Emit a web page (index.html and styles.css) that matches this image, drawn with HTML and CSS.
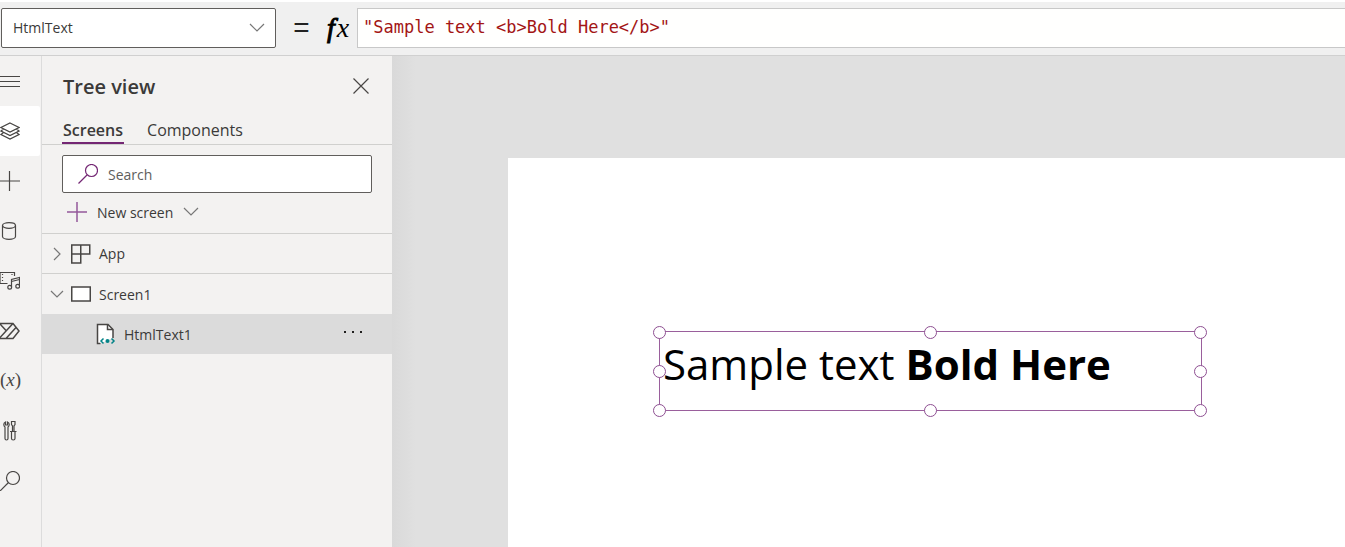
FILE: index.html
```html
<!DOCTYPE html>
<html lang="en">
<head>
    <meta charset="UTF-8">
    <meta name="viewport" content="width=device-width, initial-scale=1.0">
    <title>App Studio</title>
    <link rel="stylesheet" href="styles.css">
</head>
<body>
    <header class="formula-bar">
        <div class="property">
            <select class="property-select" aria-label="Property">
                <option>HtmlText</option>
            </select>
            <svg class="property-arrow" width="16" height="10" viewBox="0 0 16 10"><path d="M1 1l7 7 7-7"/></svg>
        </div>
        <span class="equals">=</span>
        <label class="fx" for="formula"><span class="fx-f">f</span>x</label>
        <input class="formula" id="formula" type="text" spellcheck="false" value="&quot;Sample text &lt;b&gt;Bold Here&lt;/b&gt;&quot;">
    </header>

    <div class="workspace">
        <nav class="rail">
            <button class="rail-item" aria-label="Menu">
                <svg width="20" height="20" viewBox="0 0 20 20"><path d="M0 5.5h20M0 10.5h20M0 15.5h20"/></svg>
            </button>
            <button class="rail-item active" aria-label="Tree view">
                <svg width="20" height="20" viewBox="0 0 20 20"><path d="M10 2L19 6.500 10 11 1 6.500zM3.500 8L1 10l9 4.500 9-4.500-2.500-2M3.500 11.500L1 13.500l9 4.500 9-4.500-2.500-2"/></svg>
            </button>
            <button class="rail-item" aria-label="Insert">
                <svg width="20" height="20" viewBox="0 0 20 20"><path d="M0 10h20M9.500 0v20"/></svg>
            </button>
            <button class="rail-item" aria-label="Data">
                <svg width="20" height="20" viewBox="0 0 20 20"><ellipse cx="9" cy="4.500" rx="6.500" ry="2.800"/><path d="M2.500 4.500v11c0 1.500 2.900 2.800 6.500 2.800s6.500-1.300 6.500-2.800v-11"/></svg>
            </button>
            <button class="rail-item" aria-label="Media">
                <svg width="20" height="20" viewBox="0 0 20 20"><path d="M14.500 5V1.500H0v11h7.500"/><path d="M2.500 3v9M12 3v3" stroke-dasharray="1 2"/><path d="M11.500 16V8.500l8-2V15M11.500 10.500l8-2"/><circle cx="9.700" cy="16.300" r="1.900"/><circle cx="17.700" cy="15.300" r="1.900"/></svg>
            </button>
            <button class="rail-item" aria-label="Power Automate">
                <svg class="bold-icon" width="20" height="20" viewBox="0 0 20 20"><path d="M0 2.500h13l6 7.500-6 7.500H0M0 3l6 6.500M12.500 3L0 16.500M16 6.500L6 17.500M0 9.500"/></svg>
            </button>
            <button class="rail-item variables" aria-label="Variables">(<i>x</i>)</button>
            <button class="rail-item" aria-label="Advanced tools">
                <svg width="20" height="20" viewBox="0 0 20 20"><path d="M5.500 1v3h2V1c1.200.5 1.700 1.500 1.700 2.500S8.700 5.500 8 6v11.500c0 2-3 2-3 0V6c-.7-.5-1.200-1.500-1.200-2.500S4.300 1.500 5.500 1zM11.500.5h3.500v3l-1 1.500v5.500h-1.500V5l-1-1.500zM10 10.500h6.500M11.500 10.500H15v7c0 2-3.500 2-3.500 0z"/></svg>
            </button>
            <button class="rail-item" aria-label="Search">
                <svg width="20" height="20" viewBox="0 0 20 20"><circle cx="13" cy="7" r="6.500"/><path d="M8.500 11.500L0 20"/></svg>
            </button>
        </nav>

        <aside class="tree-view">
            <div class="tree-header">
                <h2 class="tree-title">Tree view</h2>
                <button class="close" aria-label="Close">
                    <svg width="16" height="16" viewBox="0 0 16 16"><path d="M.5.5l15 15M15.500.5l-15 15"/></svg>
                </button>
            </div>
            <div class="tabs" role="tablist">
                <button class="tab selected" role="tab" aria-selected="true">Screens</button>
                <button class="tab" role="tab" aria-selected="false">Components</button>
            </div>
            <label class="search">
                <svg width="20" height="20" viewBox="0 0 20 20"><circle cx="13.500" cy="6.500" r="6"/><path d="M9 11L.5 19.500"/></svg>
                <input class="search-input" type="text" placeholder="Search" aria-label="Search">
            </label>
            <button class="new-screen">
                <svg class="purple" width="20" height="20" viewBox="0 0 20 20"><path d="M0 10h20M10 0v20"/></svg>
                <span>New screen</span>
                <svg class="chevron" width="16" height="10" viewBox="0 0 16 10"><path d="M1 1l7 7 7-7"/></svg>
            </button>
            <ul class="tree">
                <li class="row ruled">
                    <svg class="chevron arrow" width="14" height="14" viewBox="0 0 14 14"><path d="M4 1l6 6-6 6"/></svg>
                    <svg class="type-icon" width="20" height="20" viewBox="0 0 20 20"><path d="M.75 1h18v9H.75zM.75 1h9v18h-9z"/></svg>
                    <span>App</span>
                </li>
                <li class="row ruled screen-row">
                    <svg class="chevron arrow" width="14" height="14" viewBox="0 0 14 14"><path d="M1 4l6 6 6-6"/></svg>
                    <svg class="type-icon" width="20" height="20" viewBox="0 0 20 20"><rect class="paper" x=".75" y="3" width="18.500" height="14"/></svg>
                    <span>Screen1</span>
                </li>
                <li class="row child">
                    <svg class="type-icon" width="20" height="22" viewBox="0 0 20 22"><path class="paper" d="M4.500 20.500H1.500v-19H12l5 5V15"/><path d="M11.500 1.500v5H17"/><path class="teal" d="M7.500 15.500L5 18l2.500 2.500M15.500 15.500L18 18l-2.500 2.500"/><circle class="teal-dot" cx="11.500" cy="18" r="2"/></svg>
                    <span>HtmlText1</span>
                    <button class="more" aria-label="More actions">
                        <svg width="20" height="8" viewBox="0 0 20 8"><path d="M1 1h2v2H1zM9 1h2v2H9zM17 1h2v2h-2z"/></svg>
                    </button>
                </li>
            </ul>
        </aside>

        <main class="canvas">
            <div class="screen">
                <div class="html-text">
                    Sample text <b>Bold Here</b>
                    <span class="handle top left"></span>
                    <span class="handle top center"></span>
                    <span class="handle top right"></span>
                    <span class="handle middle left"></span>
                    <span class="handle middle right"></span>
                    <span class="handle bottom left"></span>
                    <span class="handle bottom center"></span>
                    <span class="handle bottom right"></span>
                </div>
            </div>
        </main>
    </div>
</body>
</html>
```
FILE: styles.css
```css
* {
    box-sizing: border-box;
}
body {
    margin: 0;
    height: 100vh;
    display: flex;
    flex-direction: column;
    overflow: hidden;
    font-family: "Open Sans", "Noto Sans", sans-serif;
    font-size: 14px;
    color: #3b3a39;
    background: #f3f2f1;
}
button {
    border: none;
    padding: 0;
    background: none;
    font-family: inherit;
    color: inherit;
    cursor: pointer;
}
svg {
    flex: none;
    fill: none;
    stroke: #484644;
    stroke-width: 1.2;
}

/* formula bar */
.formula-bar {
    display: flex;
    align-items: center;
    height: 56px;
    padding: 0 0 2px 1px;
    border-top: 2px solid #fff;
    border-bottom: 1px solid #d0d0d0;
    background: #f0f0f0;
}
.property {
    position: relative;
    width: 275px;
}
.property-select {
    appearance: none;
    display: block;
    width: 100%;
    height: 40px;
    padding: 0 11px;
    border: 1px solid #605e5c;
    border-radius: 2px;
    background: #fff;
    font-family: inherit;
    font-size: 14px;
    color: #3b3a39;
}
.property-arrow {
    position: absolute;
    right: 11px;
    top: 15px;
    stroke: #777;
    pointer-events: none;
}
.equals {
    width: 48px;
    padding-left: 3px;
    text-align: center;
    font-family: "Liberation Sans", Arial, sans-serif;
    font-size: 28px;
    line-height: 30px;
    color: #222;
}
.fx {
    width: 33px;
    font-family: "Liberation Serif", serif;
    font-size: 28px;
    font-style: italic;
    line-height: 30px;
    color: #000;
}
.fx-f {
    margin: 0 2px 0 3px;
    -webkit-text-stroke: 1px #000;
}
.formula {
    flex: 1;
    min-width: 0;
    height: 40px;
    padding: 0 5px 2px;
    border: 1px solid #c8c8c8;
    border-right: none;
    background: #fffffe;
    font-family: "DejaVu Sans Mono", monospace;
    font-size: 17px;
    color: #a31515;
}

.workspace {
    flex: 1;
    min-height: 0;
    display: flex;
}

/* left rail */
.rail {
    width: 42px;
    border-right: 1px solid #dcdcdc;
}
.rail-item {
    display: flex;
    align-items: center;
    width: 40px;
    height: 50px;
    border-radius: 0 2px 2px 0;
}
.rail-item.active {
    background: #fff;
}
.bold-icon {
    stroke-width: 1.5;
}
.variables {
    padding-bottom: 3px;
    font-family: "Liberation Serif", serif;
    font-size: 19px;
    color: #484644;
}

/* tree view */
.tree-view {
    width: 350px;
}
.tree-header {
    display: flex;
    align-items: center;
    justify-content: space-between;
    height: 60px;
    padding: 0 23px 0 21px;
}
.tree-title {
    margin: 0;
    font-size: 20px;
    font-weight: 600;
}
.close {
    display: flex;
}
.tabs {
    display: flex;
    gap: 22px;
    height: 29px;
    padding-left: 20px;
    border-bottom: 1px solid #d0d0ce;
}
.tab {
    padding: 2px 1px 0;
    border-bottom: 2px solid transparent;
    font-size: 16px;
    line-height: 24px;
}
.tab.selected {
    border-color: #742774;
    font-weight: 600;
}
.search {
    display: flex;
    align-items: center;
    gap: 10px;
    height: 38px;
    margin: 10px 20px 0;
    padding: 0 15px;
    border: 1px solid #605e5c;
    border-radius: 2px;
    background: #fff;
}
.search svg {
    stroke: #742774;
}
.search-input {
    flex: 1;
    min-width: 0;
    padding: 0;
    border: none;
    outline: none;
    background: none;
    font-family: inherit;
    font-size: 14px;
}
.search-input::placeholder {
    color: #605e5c;
}
.new-screen {
    display: flex;
    align-items: center;
    gap: 10px;
    height: 40px;
    padding: 0 0 2px 25px;
    font-size: 14px;
}
.purple {
    stroke: #94589a;
    stroke-width: 1.5;
}
.chevron {
    stroke: #777;
}
.tree {
    margin: 0;
    padding: 0;
    list-style: none;
}
.row {
    display: flex;
    align-items: center;
    height: 40px;
    padding-left: 8px;
}
.row.ruled {
    border-top: 1px solid #d0d0ce;
}
.row.screen-row {
    height: 41px;
}
.row.child {
    padding: 0 29px 0 54px;
    background: #dbdbdb;
}
.arrow {
    margin-right: 7px;
}
.type-icon {
    margin-right: 8px;
    stroke-width: 1.5;
}
.paper {
    fill: #fff;
}
.teal {
    stroke: #038387;
}
.teal-dot {
    fill: #038387;
    stroke: none;
}
.more {
    display: flex;
    margin-left: auto;
}
.more svg {
    fill: #201f1e;
    stroke: none;
}

/* canvas */
.canvas {
    flex: 1;
    min-width: 0;
    display: flex;
    padding: 102px 0 0 116px;
    background: linear-gradient(to right, #d9d9d9, #e0e0e0 24px);
}
.screen {
    position: relative;
    flex: 1;
    background: #fff;
}
.html-text {
    position: absolute;
    left: 151px;
    top: 173px;
    width: 543px;
    height: 80px;
    padding: 3px;
    border: 1px solid #9a5f9c;
    font-size: 42px;
    line-height: 57px;
    white-space: nowrap;
    color: #000;
}
.handle {
    position: absolute;
    width: 13px;
    height: 13px;
    border: 1px solid #8e4f92;
    border-radius: 50%;
    background: #fff;
}
.top {
    top: -6px;
}
.middle {
    top: calc(50% - 6px);
}
.bottom {
    bottom: -7px;
}
.left {
    left: -7px;
}
.center {
    left: calc(50% - 7px);
}
.right {
    right: -6px;
}
```
